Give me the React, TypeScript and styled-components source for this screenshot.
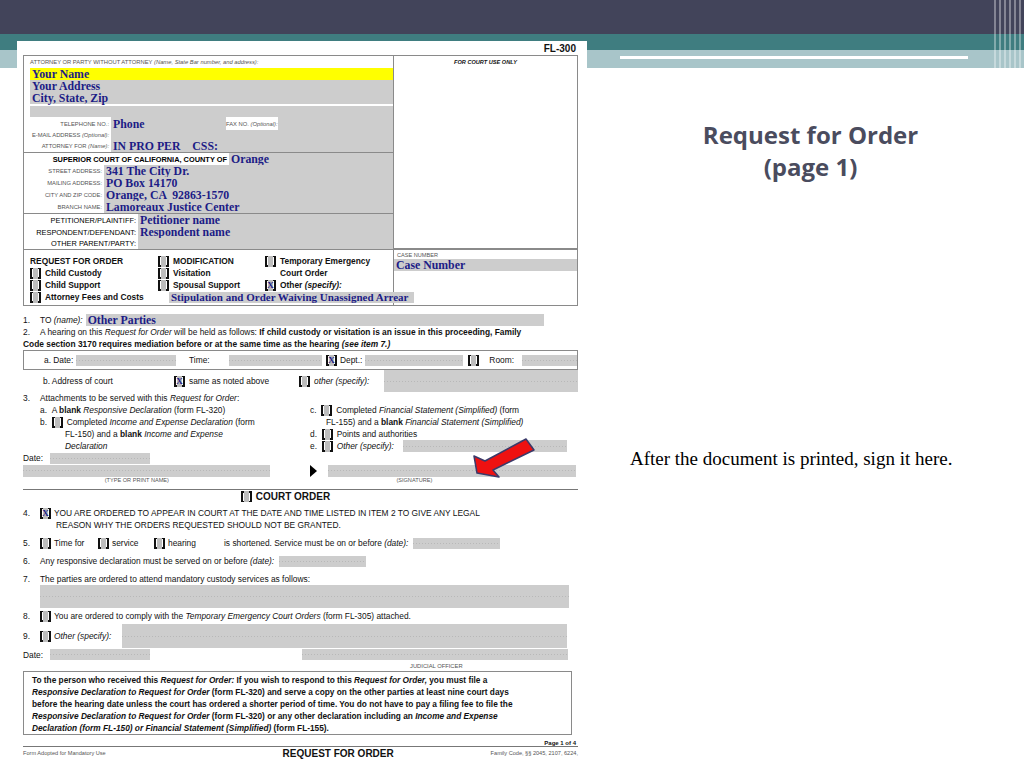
import React from "react";
import styled, { createGlobalStyle } from "styled-components";

const G = createGlobalStyle`
  html,body{margin:0;padding:0;background:#fff;}
  body{width:1024px;height:768px;overflow:hidden;font-family:"Liberation Sans",Arial,sans-serif;}
`;

const Slide = styled.div`
  position: relative; width: 1024px; height: 768px; overflow: hidden;
  display: flex; padding: 41px 0 0 17px; box-sizing: border-box; background:#fff;
`;
const Bands = styled.div`
  position: absolute; left: 0; top: 0; width: 1024px; height: 70px; z-index: 0;
  background: linear-gradient(#42445a 0 34px, #3f7d80 34px 50px, #a8c5c9 50px 68px, #fff 68px);
`;
const WhiteLine = styled.div`
  position: absolute; left: 620px; top: 56px; width: 348px; height: 3px; background: #fff; z-index: 0;
`;
const Stripes = styled.div`
  position: absolute; right: 0; top: 0; width: 30px; height: 70px; z-index: 0;
  background: repeating-linear-gradient(90deg, rgba(255,255,255,.35) 0 2px, rgba(255,255,255,0) 2px 5px);
`;
const Doc = styled.div`
  position: relative; z-index: 1; width: 570px; height: 727px; background: #fff;
  padding: 0 9px 0 6px; box-sizing: border-box; font-size: 8.4px; color: #111;
  display: flex; flex-direction: column;
`;
const Side = styled.div`
  position: relative; z-index: 1; flex: 1; display: flex; flex-direction: column;
`;
const Title = styled.h1`
  margin: 78px 0 0; text-align: center; font: 700 24px/32px "Open Sans", "DejaVu Sans", sans-serif;
  color: #4a4c5e; padding-left: 10px;
`;
const Note = styled.p`
  margin: 262px 0 0 43px; width: 330px; font: 19px/27px "Liberation Serif", serif; color: #000;
`;
const Arrow = styled.svg`
  position: absolute; left: 472px; top: 436px; z-index: 2;
`;

const FormNo = styled.div`
  height: 14px; text-align: right; font: 700 10px/16px "Liberation Sans", sans-serif; padding-right: 2px;
`;
const Box = styled.div<{ h: number; cols?: string }>`
  border: 1px solid #8a8a8a; height: ${p => p.h}px; box-sizing: border-box;
  display: grid; grid-template-columns: ${p => p.cols || "369px 1fr"};
`;
const Col = styled.div<{ right?: boolean }>`
  display: flex; flex-direction: column; border-left: ${p => (p.right ? "1px solid #8a8a8a" : "none")};
  min-width: 0;
`;
const Sect = styled.div<{ top?: boolean }>`
  display: flex; flex-direction: column; border-top: ${p => (p.top ? "1px solid #8a8a8a" : "none")};
`;
const Row = styled.div<{ h: number; pl?: number; gap?: number }>`
  height: ${p => p.h}px; display: flex; align-items: center; padding-left: ${p => p.pl || 0}px;
  gap: ${p => p.gap || 0}px; white-space: nowrap; flex-shrink: 0;
`;
const Tiny = styled.span<{ w?: number; bold?: boolean }>`
  font-size: ${p => (p.bold ? 7.4 : 5.8)}px; color: ${p => (p.bold ? "#000" : "#555")};
  font-weight: ${p => (p.bold ? 700 : 400)};
  width: ${p => (p.w ? p.w + "px" : "auto")}; text-align: ${p => (p.w ? "right" : "left")};
  padding-right: ${p => (p.w ? 2 : 0)}px; flex-shrink: 0; box-sizing: border-box;
  background:#fff; align-self: stretch; display: flex; align-items: center; justify-content: ${p => (p.w ? "flex-end" : "flex-start")};
`;
const Fld = styled.div<{ w?: number; h?: number; yellow?: boolean; ml?: number; big?: boolean }>`
  background: ${p => (p.yellow ? "#ffff00" : "#cdcdcd")};
  width: ${p => (p.w ? p.w + "px" : "auto")}; flex: ${p => (p.w ? "none" : 1)};
  height: ${p => (p.h ? p.h + "px" : "100%")}; margin-left: ${p => p.ml || 0}px;
  font: 700 ${p => (p.big ? 11.8 : 11)}px/12px "Liberation Serif", serif; color: #1c1c86;
  padding-left: 2px; box-sizing: border-box; display: flex; flex-direction: column; justify-content: center;
  white-space: pre; overflow: visible;
`;
const Dotted = styled.div<{ w?: number; h: number; ml?: number }>`
  background: #cdcdcd; height: ${p => p.h}px; width: ${p => (p.w ? p.w + "px" : "auto")};
  flex: ${p => (p.w ? "none" : 1)}; margin-left: ${p => p.ml || 0}px;
  background-image: linear-gradient(90deg, #b8b8b8 50%, transparent 50%);
  background-size: 3px 1px; background-repeat: repeat-x; background-position: 0 50%;
`;
const T = styled.span<{ b?: boolean; i?: boolean; w?: number }>`
  font-size: 8.4px; font-weight: ${p => (p.b ? 700 : 400)}; font-style: ${p => (p.i ? "italic" : "normal")};
  width: ${p => (p.w ? p.w + "px" : "auto")}; flex-shrink: 0;
`;
const Num = styled.span`
  display: inline-block; width: 17px; font-size: 8.4px; flex-shrink: 0;
`;
const Chk = styled.span<{ x?: boolean; mr?: number }>`
  position: relative; display: inline-flex; width: 11px; height: 11px; margin-right: ${p => (p.mr ?? 4)}px;
  box-sizing: border-box; border-left: 2px solid #111; border-right: 2px solid #111; flex-shrink: 0;
  background: linear-gradient(90deg,#fff 0 1px,#bdbdbd 1px calc(100% - 1px),#fff calc(100% - 1px));
  align-items: center; justify-content: center;
  font: 700 9px/1 "Liberation Serif", serif; color: #1c1c86;
  &::before,&::after{content:"";position:absolute;left:-2px;right:-2px;height:0;
    border-left:3px solid #111;border-right:3px solid #111;}
  &::before{top:0;height:1.5px;}
  &::after{bottom:0;height:1.5px;}
`;
const Wide = styled.div<{ w: number }>`
  width: ${p => p.w}px; display: flex; align-items: center; flex-shrink: 0;
`;
const Para = styled.div<{ pl?: number; h?: number }>`
  padding-left: ${p => p.pl || 0}px; line-height: 12px; font-size: 8.4px; white-space: nowrap;
  height: ${p => (p.h ? p.h + "px" : "auto")};
`;
const Frame = styled.div<{ h: number; pl?: number }>`
  border: 1px solid #8a8a8a; height: ${p => p.h}px; box-sizing: border-box; display: flex; align-items: center;
  padding-left: ${p => p.pl || 0}px; margin-right: 0;
`;
const Tri = styled.span`
  width: 0; height: 0; border-top: 6px solid transparent; border-bottom: 6px solid transparent;
  border-left: 7px solid #000; margin: 0 11px 0 40px;
`;
const Caps = styled.div`
  display: flex; border-bottom: 1px solid #777; height: 12px; align-items: flex-start; font-size: 5.6px; color: #555;
`;
const Center = styled.div<{ w: number }>`
  width: ${p => p.w}px; text-align: center;
`;
const Heading = styled.div`
  height: 13px; display: flex; justify-content: center; align-items: center; font: 700 10px "Liberation Sans", sans-serif;
  padding-right: 30px;
`;
const Notice = styled.div`
  border: 1px solid #8a8a8a; margin: 0 6px 0 0; padding: 2px 8px; font-size: 8.3px; font-weight: 700; line-height: 12px;
  height: 64px; box-sizing: border-box; white-space: nowrap;
`;
const Foot = styled.div`
  display: flex; justify-content: space-between; align-items: flex-end; border-bottom: 1px solid #777;
  height: 11px; font-size: 6px; font-weight: 700; padding-right: 2px;
`;
const Foot2 = styled.div`
  display: flex; justify-content: space-between; align-items: center; height: 12px; font-size: 5.6px; color: #555;
  & b { font: 700 10px "Liberation Sans", sans-serif; color: #111; margin-left: 80px; }
`;
const Gap = styled.div<{ h: number }>` height: ${p => p.h}px; flex-shrink: 0; `;

const SmallLbl = styled.div`
  font-size: 5.6px; color: #555; padding: 2px 0 0 3px; height: 7px;
`;
const CourtUse = styled.div`
  font-size: 5.6px; font-weight: 700; font-style: italic; text-align: center; padding-top: 3px;
`;

export default function App() {
  return (
    <>
      <G />
      <Slide>
        <Bands />
        <WhiteLine />
        <Stripes />
        <Doc>
          <FormNo>FL-300</FormNo>
          <Box h={194}>
            <Col>
              <Row h={12} pl={6}><Tiny>ATTORNEY OR PARTY WITHOUT ATTORNEY <i>&nbsp;(Name, State Bar number, and address):</i></Tiny></Row>
              <Row h={12} pl={6}><Fld yellow big>Your Name</Fld></Row>
              <Row h={24} pl={6}><Fld big>{"Your Address\nCity, State, Zip"}</Fld></Row>
              <Row h={2} />
              <Row h={11} pl={6}><Fld /></Row>
              <Row h={13}><Tiny w={87}>TELEPHONE NO.:</Tiny><Fld w={115} big>Phone</Fld><Tiny>FAX NO. <i>&nbsp;(Optional):</i></Tiny><Fld /></Row>
              <Row h={10}><Tiny w={87}>E-MAIL ADDRESS <i>&nbsp;(Optional):</i></Tiny><Fld /></Row>
              <Row h={12}><Tiny w={87}>ATTORNEY FOR <i>&nbsp;(Name):</i></Tiny><Fld big>{"IN PRO PER    CSS:"}</Fld></Row>
              <Sect top>
                <Row h={12}><Tiny bold w={205}><span style={{ flex: 1, paddingLeft: 6 }}>SUPERIOR COURT OF CALIFORNIA, COUNTY OF</span></Tiny><Fld big>Orange</Fld></Row>
                <Row h={12}><Tiny w={80}>STREET ADDRESS:</Tiny><Fld big>341 The City Dr.</Fld></Row>
                <Row h={12}><Tiny w={80}>MAILING ADDRESS:</Tiny><Fld big>PO Box 14170</Fld></Row>
                <Row h={12}><Tiny w={80}>CITY AND ZIP CODE:</Tiny><Fld big>Orange, CA  92863-1570</Fld></Row>
                <Row h={12}><Tiny w={80}>BRANCH NAME:</Tiny><Fld big>Lamoreaux Justice Center</Fld></Row>
              </Sect>
              <Sect top>
                <Row h={12}><Tiny bold w={114}><span style={{ fontWeight: 400 }}>PETITIONER/PLAINTIFF:</span></Tiny><Fld big>Petitioner name</Fld></Row>
                <Row h={12}><Tiny bold w={114}><span style={{ fontWeight: 400 }}>RESPONDENT/DEFENDANT:</span></Tiny><Fld big>Respondent name</Fld></Row>
                <Row h={11}><Tiny bold w={114}><span style={{ fontWeight: 400 }}>OTHER PARENT/PARTY:</span></Tiny><Fld /></Row>
              </Sect>
            </Col>
            <Col right><CourtUse>FOR COURT USE ONLY</CourtUse></Col>
          </Box>
          <Box h={57}>
            <Col>
              <Gap h={5} />
              <Row h={12} pl={6}><Wide w={128}><T b>REQUEST FOR ORDER</T></Wide><Wide w={107}><Chk /><T b>MODIFICATION</T></Wide><Chk /><T b>Temporary Emergency</T></Row>
              <Row h={12} pl={6}><Wide w={128}><Chk /><T b>Child Custody</T></Wide><Wide w={107}><Chk /><T b>Visitation</T></Wide><T b style={{ marginLeft: 15 }}>Court Order</T></Row>
              <Row h={12} pl={6}><Wide w={128}><Chk /><T b>Child Support</T></Wide><Wide w={107}><Chk /><T b>Spousal Support</T></Wide><Chk x>X</Chk><T b>Other <i>(specify):</i></T></Row>
              <Row h={12} pl={6} style={{ overflow: "visible", zIndex: 1 }}><Wide w={139}><Chk /><T b>Attorney Fees and Costs</T></Wide><Fld w={245} h={11}>Stipulation and Order Waiving Unassigned Arrear</Fld></Row>
            </Col>
            <Col right>
              <SmallLbl>CASE NUMBER</SmallLbl>
              <Row h={12}><Fld big>Case Number</Fld></Row>
            </Col>
          </Box>
          <Gap h={8} />
          <Row h={12}><Num>1.</Num><T>TO <i>(name):</i></T><Fld w={458} ml={3} big>Other Parties</Fld></Row>
          <Para h={12}><Num>2.</Num>A hearing on this <i>Request for Order</i> will be held as follows: <b>If child custody or visitation is an issue in this proceeding, Family</b></Para>
          <Para h={12}><b>Code section 3170 requires mediation before or at the same time as the hearing <i>(see item 7.)</i></b></Para>
          <Frame h={20} pl={20}>
            <T w={32}>a. Date:</T><Dotted h={11} w={100} /><T w={37} style={{ paddingLeft: 13 }}>Time:</T><Dotted h={11} w={93} ml={3} /><Chk x mr={3} style={{ marginLeft: 4 }}>X</Chk><T>Dept.:</T><Dotted h={11} w={98} ml={3} /><Chk mr={10} style={{ marginLeft: 5 }} /><T>Room:</T><Dotted h={11} ml={8} />
          </Frame>
          <Row h={22} pl={20}><T w={131}>b. Address of court</T><Chk x>X</Chk><T w={110}>same as noted above</T><Chk /><T i w={70}>other (specify):</T><Dotted h={22} /></Row>
          <Para><Num>3.</Num>Attachments to be served with this <i>Request for Order</i>:</Para>
          <Row h={12} pl={17}><Wide w={270}><T>a.&nbsp;&nbsp;A <b>blank</b> <i>Responsive Declaration</i> (form FL-320)</T></Wide><T>c.&nbsp;&nbsp;</T><Chk /><T>Completed <i>Financial Statement (Simplified)</i> (form</T></Row>
          <Row h={12} pl={17}><Wide w={270}><T>b.&nbsp;&nbsp;</T><Chk /><T>Completed <i>Income and Expense Declaration</i> (form</T></Wide><T style={{ paddingLeft: 16 }}>FL-155) and a <b>blank</b> <i>Financial Statement (Simplified)</i></T></Row>
          <Row h={12} pl={17}><Wide w={270}><T style={{ paddingLeft: 25 }}>FL-150) and a <b>blank</b> <i>Income and Expense</i></T></Wide><T>d.&nbsp;&nbsp;</T><Chk /><T>Points and authorities</T></Row>
          <Row h={12} pl={17}><Wide w={270}><T i style={{ paddingLeft: 25 }}>Declaration</T></Wide><T>e.&nbsp;&nbsp;</T><Chk /><T i w={66}>Other (specify):</T><Dotted h={12} w={164} /></Row>
          <Row h={12}><T w={27}>Date:</T><Dotted h={11} w={100} /></Row>
          <Row h={13}><Dotted h={12} w={247} /><Tri /><Dotted h={12} w={248} /></Row>
          <Caps><Center w={247}>(TYPE OR PRINT NAME)</Center><Center w={355}>(SIGNATURE)</Center></Caps>
          <Heading><Chk />COURT ORDER</Heading>
          <Gap h={4} />
          <Row h={12}><Num>4.</Num><Chk x mr={3}>X</Chk><T>YOU ARE ORDERED TO APPEAR IN COURT AT THE DATE AND TIME LISTED IN ITEM 2 TO GIVE ANY LEGAL</T></Row>
          <Para pl={33}>REASON WHY THE ORDERS REQUESTED SHOULD NOT BE GRANTED.</Para>
          <Gap h={6} />
          <Row h={12}><Num>5.</Num><Chk mr={3} /><T w={44}>Time for</T><Chk mr={3} /><T w={42}>service</T><Chk mr={3} /><T w={56}>hearing</T><T>is shortened. Service must be on or before <i>(date):</i></T><Dotted h={11} w={87} ml={5} /></Row>
          <Gap h={6} />
          <Row h={12}><Num>6.</Num><T>Any responsive declaration must be served on or before <i>(date):</i></T><Dotted h={11} w={87} ml={5} /></Row>
          <Gap h={6} />
          <Row h={12}><Num>7.</Num><T>The parties are ordered to attend mandatory custody services as follows:</T></Row>
          <Row h={23} pl={17}><Dotted h={23} w={529} /></Row>
          <Gap h={1} />
          <Row h={14}><Num>8.</Num><Chk mr={3} /><T>You are ordered to comply with the <i>Temporary Emergency Court Orders</i> (form FL-305) attached.</T></Row>
          <Gap h={1} />
          <Row h={24}><Num>9.</Num><Chk mr={3} /><T i w={68}>Other (specify):</T><Dotted h={24} w={445} /></Row>
          <Row h={13}><T w={27}>Date:</T><Dotted h={11} w={100} /><Dotted h={11} w={266} ml={152} /></Row>
          <Row h={10}><Tiny style={{ marginLeft: 387 }}>JUDICIAL OFFICER</Tiny></Row>
          <Notice>
            <div>To the person who received this <i>Request for Order:</i> If you wish to respond to this <i>Request for Order,</i> you must file a</div>
            <div><i>Responsive Declaration to Request for Order</i> (form FL-320) and serve a copy on the other parties at least nine court days</div>
            <div>before the hearing date unless the court has ordered a shorter period of time. You do not have to pay a filing fee to file the</div>
            <div><i>Responsive Declaration to Request for Order</i> (form FL-320) or any other declaration including an <i>Income and Expense</i></div>
            <div><i>Declaration (form FL-150) or Financial Statement (Simplified)</i> (form FL-155).</div>
          </Notice>
          <Foot><span /><span>Page 1 of 4</span></Foot>
          <Foot2><span>Form Adopted for Mandatory Use</span><b>REQUEST FOR ORDER</b><span>Family Code, §§ 2045, 2107, 6224,</span></Foot2>
        </Doc>
        <Side>
          <Title>Request for Order<br />(page 1)</Title>
          <Note>After the document is printed, sign it here.</Note>
        </Side>
        <Arrow width="66" height="42" viewBox="0 0 66 42">
          <polygon points="5,37 2,20 13,25 54,3 62,14 21,34 27,41" fill="#ee1111" stroke="#3a3a6a" strokeWidth="1.5" strokeLinejoin="round" />
        </Arrow>
      </Slide>
    </>
  );
}
